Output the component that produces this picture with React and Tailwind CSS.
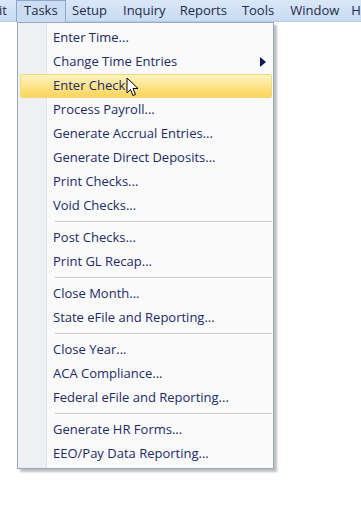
import React from "react";

const groups = [
  ["Enter Time...", "Change Time Entries", "Enter Check", "Process Payroll...", "Generate Accrual Entries...", "Generate Direct Deposits...", "Print Checks...", "Void Checks..."],
  ["Post Checks...", "Print GL Recap..."],
  ["Close Month...", "State eFile and Reporting..."],
  ["Close Year...", "ACA Compliance...", "Federal eFile and Reporting..."],
  ["Generate HR Forms...", "EEO/Pay Data Reporting..."],
];

function Item({ label }) {
  const active = label === "Enter Check";
  const sub = label === "Change Time Entries";
  return (
    <div className="relative flex h-[24px] items-center">
      {active && (
        <div className="absolute inset-y-0 left-[2px] right-[1px] rounded-[2px] border border-[#f2d97a] bg-gradient-to-b from-[#fff3c4] via-[#fde48a] to-[#fbd55a]" />
      )}
      <span className="relative pl-[35px] text-[13px] text-[#1c2a66]">{label}</span>
      {sub && (
        <svg className="absolute right-[7px] top-[7px]" width="6" height="10" viewBox="0 0 6 10">
          <path d="M0 0 L6 5 L0 10 Z" fill="#0d1a4f" />
        </svg>
      )}
      {active && (
        <svg className="absolute left-[108px] top-[3px]" width="13" height="20" viewBox="0 0 13 20">
          <path d="M1 1 L1 16 L4.5 12.5 L7 18.5 L9.5 17.5 L7 11.5 L12 11.5 Z" fill="white" stroke="black" strokeWidth="1" strokeLinejoin="round" />
        </svg>
      )}
    </div>
  );
}

export default function App() {
  return (
    <div className="relative h-[531px] w-[361px] overflow-hidden bg-white" style={{ fontFamily: '"Open Sans", "Noto Sans", sans-serif' }}>
      <div className="flex h-[22px] items-center whitespace-nowrap border-b border-[#b9cbe4] bg-gradient-to-b from-[#d9e7f8] to-[#c9dbf3] text-[13px] text-[#1d2a4d]">
        <span className="-ml-[1px] w-[17px]">it</span>
        <span className="flex h-[22px] w-[50px] items-center border border-b-0 border-[#8fa7c6] bg-[#cbdcf3] pl-[7px]">Tasks</span>
        <span className="ml-[6px] mr-[16px]">Setup</span>
        <span className="mr-[14px]">Inquiry</span>
        <span className="mr-[15px]">Reports</span>
        <span className="mr-[16px]">Tools</span>
        <span className="mr-[12px]">Window</span>
        <span>H</span>
      </div>
      <div className="absolute left-[17px] top-[22px] w-[257px] border border-[#97a8c4] bg-[#fafafb] pb-[2px] pt-[3px] shadow-[3px_3px_2px_rgba(0,0,0,0.25)]">
        <div className="absolute bottom-0 left-0 top-0 w-[29px] border-r border-[#dfe2e8] bg-[#eef0f4]" />
        {groups.map((g, gi) => (
          <div key={gi}>
            {gi > 0 && (
              <div className="relative flex h-[8px] items-center pl-[37px] pr-[1px]">
                <div className="h-[2px] w-full border-t border-b border-t-[#c6c9cf] border-b-white" />
              </div>
            )}
            {g.map((l) => (
              <Item key={l} label={l} />
            ))}
          </div>
        ))}
      </div>
    </div>
  );
}
